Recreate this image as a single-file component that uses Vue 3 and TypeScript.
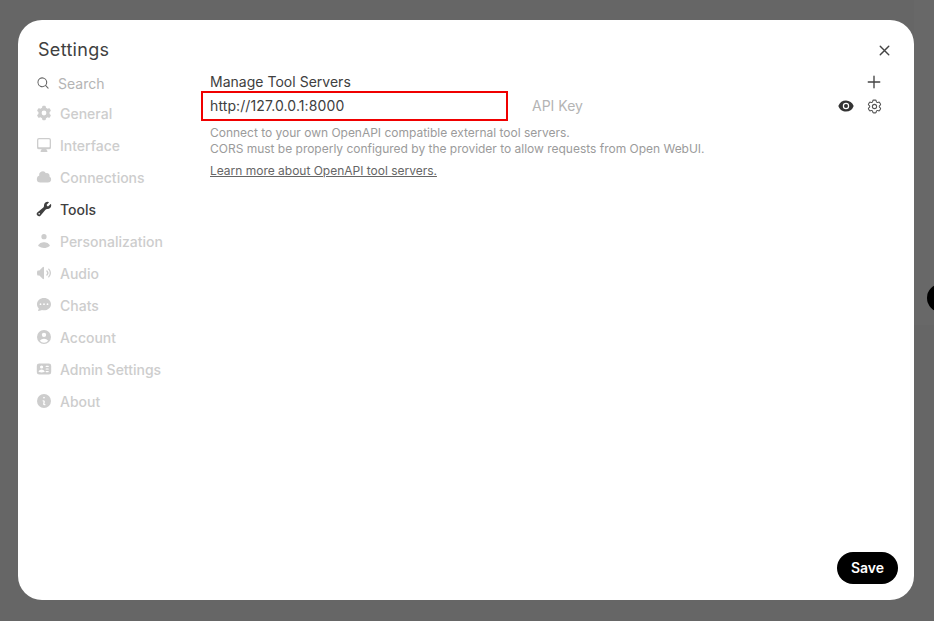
<script setup lang="ts">
interface NavItem { label: string; paths: string[]; active?: boolean; box?: string }

const tight = '0.85 0.85 18.3 18.3'

const items: NavItem[] = [
  { label: 'General', paths: ['M7.84 1.804A1 1 0 0 1 8.82 1h2.36a1 1 0 0 1 .98.804l.331 1.652a6.993 6.993 0 0 1 1.929 1.115l1.598-.54a1 1 0 0 1 1.186.447l1.18 2.044a1 1 0 0 1-.205 1.251l-1.267 1.113a7.047 7.047 0 0 1 0 2.228l1.267 1.113a1 1 0 0 1 .206 1.25l-1.18 2.045a1 1 0 0 1-1.187.447l-1.598-.54a6.993 6.993 0 0 1-1.929 1.115l-.33 1.652a1 1 0 0 1-.98.804H8.82a1 1 0 0 1-.98-.804l-.331-1.652a6.993 6.993 0 0 1-1.929-1.115l-1.598.54a1 1 0 0 1-1.186-.447l-1.18-2.044a1 1 0 0 1 .205-1.251l1.267-1.114a7.05 7.05 0 0 1 0-2.227L1.821 7.773a1 1 0 0 1-.206-1.25l1.18-2.045a1 1 0 0 1 1.187-.447l1.598.54A6.992 6.992 0 0 1 7.51 3.456l.33-1.652ZM10 13a3 3 0 1 0 0-6 3 3 0 0 0 0 6Z'] },
  { label: 'Interface', box: tight, paths: ['M2 4.25A2.25 2.25 0 0 1 4.25 2h11.5A2.25 2.25 0 0 1 18 4.25v8.5A2.25 2.25 0 0 1 15.75 15h-3.105a3.501 3.501 0 0 0 1.1 1.677A.75.75 0 0 1 13.26 18H6.74a.75.75 0 0 1-.484-1.323A3.501 3.501 0 0 0 7.355 15H4.25A2.25 2.25 0 0 1 2 12.75v-8.5Zm1.5 0a.75.75 0 0 1 .75-.75h11.5a.75.75 0 0 1 .75.75v7.5a.75.75 0 0 1-.75.75H4.25a.75.75 0 0 1-.75-.75v-7.5Z'] },
  { label: 'Connections', paths: ['M1 12.5A4.5 4.5 0 0 0 5.5 17H15a4 4 0 0 0 1.866-7.539 3.504 3.504 0 0 0-4.504-4.272A4.5 4.5 0 0 0 4.06 8.235 4.502 4.502 0 0 0 1 12.5Z'] },
  { label: 'Tools', active: true, paths: ['M19 5.5a4.5 4.5 0 0 1-4.791 4.49c-.873-.055-1.808.128-2.368.8l-6.024 7.23a2.724 2.724 0 1 1-3.837-3.837L9.21 8.16c.672-.56.855-1.495.8-2.368a4.5 4.5 0 0 1 5.873-4.575c.324.105.39.51.15.752L13.34 4.66a.455.455 0 0 0-.11.494 3.01 3.01 0 0 0 1.617 1.617c.17.07.363.02.493-.111l2.692-2.692c.241-.241.647-.174.752.15.14.435.216.9.216 1.382ZM4 17a1 1 0 1 0 0-2 1 1 0 0 0 0 2Z'] },
  { label: 'Personalization', box: tight, paths: ['M10 8a3 3 0 1 0 0-6 3 3 0 0 0 0 6ZM3.465 14.493a1.23 1.23 0 0 0 .41 1.412A9.957 9.957 0 0 0 10 18c2.31 0 4.438-.784 6.125-2.095a1.23 1.23 0 0 0 .41-1.412A6.997 6.997 0 0 0 10 11.5a6.998 6.998 0 0 0-6.535 2.993Z'] },
  { label: 'Audio', box: tight, paths: ['M10 3.75a.75.75 0 0 0-1.264-.546L4.703 7H3.167a.75.75 0 0 0-.7.48A6.985 6.985 0 0 0 2 10c0 .887.165 1.737.468 2.52.111.29.39.48.7.48h1.535l4.033 3.796A.75.75 0 0 0 10 16.25V3.75ZM15.95 5.05a.75.75 0 0 0-1.06 1.061 5.5 5.5 0 0 1 0 7.778.75.75 0 0 0 1.06 1.06 7 7 0 0 0 0-9.899Z', 'M13.829 7.172a.75.75 0 0 0-1.061 1.06 2.5 2.5 0 0 1 0 3.536.75.75 0 0 0 1.06 1.06 4 4 0 0 0 0-5.656Z'] },
  { label: 'Chats', box: tight, paths: ['M10 2c-4.418 0-8 3.134-8 7 0 1.76.743 3.37 1.97 4.6-.097 1.016-.417 2.13-.771 2.966-.079.186.074.394.273.362 2.256-.37 3.597-.938 4.18-1.234A9.06 9.06 0 0 0 10 16c4.418 0 8-3.134 8-7s-3.582-7-8-7ZM7 9a1 1 0 1 1-2 0 1 1 0 0 1 2 0Zm4 0a1 1 0 1 1-2 0 1 1 0 0 1 2 0Zm3 1a1 1 0 1 0 0-2 1 1 0 0 0 0 2Z'] },
  { label: 'Account', box: tight, paths: ['M18 10a8 8 0 1 1-16 0 8 8 0 0 1 16 0Zm-5.5-2.5a2.5 2.5 0 1 1-5 0 2.5 2.5 0 0 1 5 0ZM10 12a5.99 5.99 0 0 0-4.793 2.39A6.483 6.483 0 0 0 10 16.5a6.483 6.483 0 0 0 4.793-2.11A5.99 5.99 0 0 0 10 12Z'] },
  { label: 'Admin Settings', paths: ['M1 6a3 3 0 0 1 3-3h12a3 3 0 0 1 3 3v8a3 3 0 0 1-3 3H4a3 3 0 0 1-3-3V6Zm4 1.5a2 2 0 1 1 4 0 2 2 0 0 1-4 0Zm2 3a4 4 0 0 0-3.665 2.395.75.75 0 0 0 .416 1A8.98 8.98 0 0 0 7 14.5a8.98 8.98 0 0 0 3.249-.604.75.75 0 0 0 .416-1.001A4.001 4.001 0 0 0 7 10.5Zm5-3.75a.75.75 0 0 1 .75-.75h2.5a.75.75 0 0 1 0 1.5h-2.5a.75.75 0 0 1-.75-.75Zm0 6.5a.75.75 0 0 1 .75-.75h2.5a.75.75 0 0 1 0 1.5h-2.5a.75.75 0 0 1-.75-.75Zm.75-4a.75.75 0 0 0 0 1.5h2.5a.75.75 0 0 0 0-1.5h-2.5Z'] },
  { label: 'About', box: tight, paths: ['M18 10a8 8 0 1 1-16 0 8 8 0 0 1 16 0Zm-7-4a1 1 0 1 1-2 0 1 1 0 0 1 2 0ZM9 9a.75.75 0 0 0 0 1.5h.253a.25.25 0 0 1 .244.304l-.459 2.066A1.75 1.75 0 0 0 10.747 15H11a.75.75 0 0 0 0-1.5h-.253a.25.25 0 0 1-.244-.304l.459-2.066A1.75 1.75 0 0 0 9.253 9H9Z'] },
]
</script>

<template>
  <div class="backdrop">
    <div class="band"></div>
    <div class="peek"></div>
    <div class="modal">
      <header class="head">
        <h1 class="title">Settings</h1>
        <svg class="close" viewBox="0 0 24 24" fill="none" stroke="currentColor" stroke-width="2" stroke-linecap="round" stroke-linejoin="round">
          <path d="M6 18 18 6M6 6l12 12" />
        </svg>
      </header>
      <div class="body">
        <nav class="side">
          <div class="search">
            <svg class="search-icon" viewBox="0 0 20 20" fill="currentColor"><path fill-rule="evenodd" clip-rule="evenodd" d="M9 3.5a5.5 5.5 0 1 0 0 11 5.5 5.5 0 0 0 0-11ZM2 9a7 7 0 1 1 12.452 4.391l3.328 3.329a.75.75 0 1 1-1.06 1.06l-3.329-3.328A7 7 0 0 1 2 9Z" /></svg>
            <span>Search</span>
          </div>
          <div v-for="item in items" :key="item.label" class="item" :class="{ active: item.active }">
            <svg class="item-icon" :viewBox="item.box || '0 0 20 20'" fill="currentColor">
              <path v-for="d in item.paths" :key="d" fill-rule="evenodd" clip-rule="evenodd" :d="d" />
            </svg>
            <span>{{ item.label }}</span>
          </div>
        </nav>
        <main class="main">
          <div class="heading-row">
            <span class="heading">Manage Tool Servers</span>
            <svg class="plus" viewBox="0 0 16 16" fill="none" stroke="currentColor" stroke-width="1.35" stroke-linecap="round"><path d="M8 2.25v11.5M2.25 8h11.5" /></svg>
          </div>
          <div class="server-row">
            <div class="url">http://127.0.0.1:8000</div>
            <div class="key">API Key</div>
            <svg class="eye" viewBox="0 0 20 20" fill="currentColor">
              <path d="M10 12.5a2.5 2.5 0 1 0 0-5 2.5 2.5 0 0 0 0 5Z" />
              <path fill-rule="evenodd" clip-rule="evenodd" d="M.664 10.59a1.651 1.651 0 0 1 0-1.186A10.004 10.004 0 0 1 10 3c4.257 0 7.893 2.66 9.336 6.41.147.381.146.804 0 1.186A10.004 10.004 0 0 1 10 17c-4.257 0-7.893-2.66-9.336-6.41ZM14 10a4 4 0 1 1-8 0 4 4 0 0 1 8 0Z" />
            </svg>
            <svg class="gear" viewBox="0 0 24 24" fill="none" stroke="currentColor" stroke-width="1.5" stroke-linecap="round" stroke-linejoin="round">
              <path d="M9.594 3.94c.09-.542.56-.94 1.11-.94h2.593c.55 0 1.02.398 1.11.94l.213 1.281c.063.374.313.686.645.87.074.04.147.083.22.127.325.196.72.257 1.075.124l1.217-.456a1.125 1.125 0 0 1 1.37.49l1.296 2.247a1.125 1.125 0 0 1-.26 1.431l-1.003.827c-.293.241-.438.613-.43.992a7.723 7.723 0 0 1 0 .255c-.008.378.137.75.43.991l1.004.827c.424.35.534.955.26 1.43l-1.298 2.247a1.125 1.125 0 0 1-1.369.491l-1.217-.456c-.355-.133-.75-.072-1.076.124a6.47 6.47 0 0 1-.22.128c-.331.183-.581.495-.644.869l-.213 1.281c-.09.543-.56.94-1.11.94h-2.594c-.55 0-1.019-.398-1.11-.94l-.213-1.281c-.062-.374-.312-.686-.644-.87a6.52 6.52 0 0 1-.22-.127c-.325-.196-.72-.257-1.076-.124l-1.217.456a1.125 1.125 0 0 1-1.369-.49l-1.297-2.247a1.125 1.125 0 0 1 .26-1.431l1.004-.827c.292-.24.437-.613.43-.991a6.932 6.932 0 0 1 0-.255c.007-.38-.138-.751-.43-.992l-1.004-.827a1.125 1.125 0 0 1-.26-1.43l1.297-2.247a1.125 1.125 0 0 1 1.37-.491l1.216.456c.356.133.751.072 1.076-.124.072-.044.146-.086.22-.128.332-.183.582-.495.644-.869l.214-1.28Z" />
              <path d="M15 12a3 3 0 1 1-6 0 3 3 0 0 1 6 0Z" />
            </svg>
          </div>
          <p class="desc">Connect to your own OpenAPI compatible external tool servers.<br />CORS must be properly configured by the provider to allow requests from Open WebUI.</p>
          <a class="learn">Learn more about OpenAPI tool servers.</a>
          <div class="foot">
            <button class="save" type="button">Save</button>
          </div>
        </main>
      </div>
    </div>
  </div>
</template>

<style scoped>
.backdrop {
  position: relative;
  width: 934px;
  height: 621px;
  box-sizing: border-box;
  padding: 20px 20px 21px 18px;
  background: #666666;
  overflow: hidden;
  font-family: Inter, "Liberation Sans", sans-serif;
}
.band {
  position: absolute;
  left: 914px;
  right: 0;
  top: 0;
  height: 325px;
  background: #686868;
}
.peek {
  position: absolute;
  left: 927px;
  top: 284px;
  width: 28px;
  height: 28px;
  border-radius: 50%;
  background: #000;
}
.modal {
  position: relative;
  display: flex;
  flex-direction: column;
  height: 100%;
  box-sizing: border-box;
  padding: 18px 15px 16px 20px;
  background: #fff;
  border-radius: 24px;
  color: #333;
}
.head {
  display: flex;
  justify-content: space-between;
  align-items: center;
  height: 24px;
  margin-bottom: 11px;
}
.title {
  margin: 0;
  font-size: 18px;
  font-weight: 400;
  line-height: 24px;
  letter-spacing: 0.3px;
  color: #404040;
}
.close {
  width: 17px;
  height: 17px;
  margin-right: 6.5px;
  color: #444;
}
.body {
  display: flex;
  flex: 1;
  min-height: 0;
}
.side {
  width: 172px;
  flex: none;
  font-size: 14px;
  font-weight: 500;
}
.search {
  display: flex;
  align-items: center;
  gap: 8px;
  height: 20px;
  margin-bottom: 4px;
  color: #b4b4b4;
  font-weight: 400;
}
.search-icon {
  width: 14px;
  height: 14px;
  margin-left: -2px;
  color: #666;
}
.item {
  display: flex;
  align-items: center;
  gap: 8px;
  height: 32px;
  margin-left: -2px;
  color: #cdcdcd;
}
.item.active {
  color: #404040;
}
.item-icon {
  width: 16px;
  height: 16px;
}
.main {
  flex: 1;
  min-width: 0;
  display: flex;
  flex-direction: column;
}
.heading-row {
  display: flex;
  justify-content: space-between;
  align-items: center;
  height: 20px;
  margin-top: -2px;
  padding-right: 17px;
  font-size: 14px;
  font-weight: 400;
  letter-spacing: 0.02px;
  color: #404040;
}
.plus {
  width: 16px;
  height: 16px;
  margin-top: 2px;
  color: #444;
}
.server-row {
  display: flex;
  align-items: center;
  height: 30px;
  margin-left: -9px;
  padding-right: 16.5px;
}
.url {
  box-sizing: border-box;
  width: 307px;
  height: 30px;
  padding-left: 7px;
  border: 2px solid #f00000;
  font-size: 14px;
  line-height: 26px;
  letter-spacing: 0.1px;
  color: #404040;
}
.key {
  flex: 1;
  margin-left: 24px;
  font-size: 14px;
  line-height: 16px;
  color: #b4b4b4;
}
.eye {
  width: 16px;
  height: 16px;
  color: #333;
  margin-right: 11.5px;
}
.gear {
  width: 17px;
  height: 17px;
  color: #555;
}
.desc {
  margin: 4px 0 0;
  font-size: 12px;
  line-height: 16px;
  letter-spacing: -0.012px;
  color: #9b9b9b;
}
.learn {
  align-self: flex-start;
  margin-top: 6px;
  font-size: 12px;
  line-height: 16px;
  letter-spacing: -0.012px;
  color: #666;
  text-decoration: underline;
}
.foot {
  display: flex;
  justify-content: flex-end;
  margin-top: auto;
  margin-right: 1px;
}
.save {
  width: 61px;
  height: 32px;
  padding: 0 0 1px;
  border: 0;
  border-radius: 16px;
  background: #000;
  color: #fff;
  font-family: inherit;
  font-size: 14px;
  font-weight: 600;
}
</style>
